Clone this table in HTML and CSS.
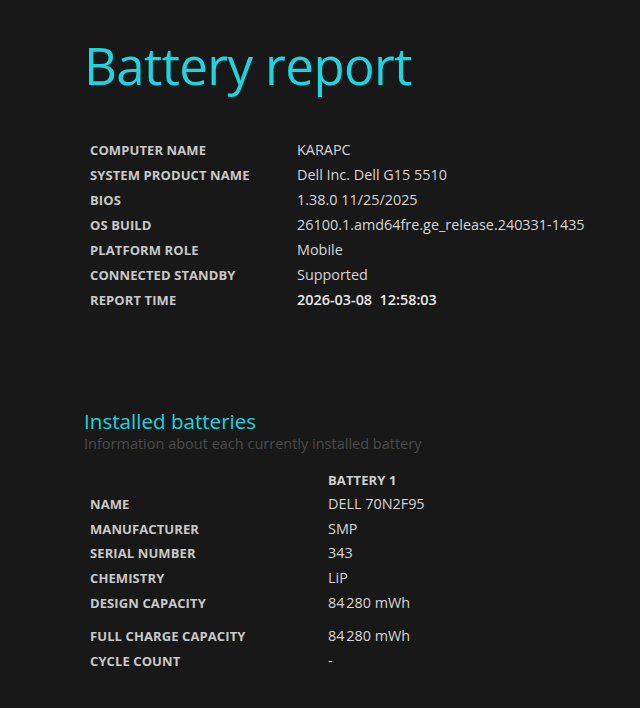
FILE: index.html
```html
<!DOCTYPE html>
<html>
<head>
<meta charset="utf-8">
<link rel="stylesheet" href="styles.css">
</head>
<body>
<main class="page">
  <h1 class="title">Battery report</h1>
  <div class="info">
    <div class="label">COMPUTER NAME</div><div class="value">KARAPC</div>
    <div class="label">SYSTEM PRODUCT NAME</div><div class="value">Dell Inc. Dell G15 5510</div>
    <div class="label">BIOS</div><div class="value">1.38.0 11/25/2025</div>
    <div class="label">OS BUILD</div><div class="value">26100.1.amd64fre.ge_release.240331-1435</div>
    <div class="label">PLATFORM ROLE</div><div class="value">Mobile</div>
    <div class="label">CONNECTED STANDBY</div><div class="value">Supported</div>
    <div class="label">REPORT TIME</div><div class="value strong">2026-03-08&nbsp;&nbsp;12:58:03</div>
  </div>

  <section class="batteries">
    <h2 class="section-title">Installed batteries</h2>
    <p class="section-sub">Information about each currently installed battery</p>
    <div class="bat">
      <div class="label"></div><div class="label head">BATTERY 1</div>
      <div class="label">NAME</div><div class="value">DELL 70N2F95</div>
      <div class="label">MANUFACTURER</div><div class="value">SMP</div>
      <div class="label">SERIAL NUMBER</div><div class="value">343</div>
      <div class="label">CHEMISTRY</div><div class="value">LiP</div>
      <div class="label">DESIGN CAPACITY</div><div class="value">84&#8239;280 mWh</div>
      <div class="label gap">FULL CHARGE CAPACITY</div><div class="value gap">84&#8239;280 mWh</div>
      <div class="label">CYCLE COUNT</div><div class="value">-</div>
    </div>
  </section>
</main>
</body>
</html>
```

FILE: styles.css
```css
html, body {
  margin: 0;
  padding: 0;
  background: #181818;
}
body {
  font-family: "Open Sans", "Noto Sans", sans-serif;
  color: #d8d8d8;
}
.page {
  padding: 30px 0 0 84px;
}
.title {
  margin: 0;
  font-weight: 400;
  font-size: 51px;
  line-height: 70px;
  color: #1fd3df;
  letter-spacing: -0.6px;
}
.info {
  display: grid;
  grid-template-columns: 207px auto;
  grid-auto-rows: 25px;
  margin: 37px 0 0 6px;
  align-items: center;
}
.label {
  font-size: 13px;
  font-weight: 700;
  color: #c9c9c9;
  letter-spacing: 0.1px;
}
.value {
  font-size: 14.4px;
  color: #d6d6d6;
}
.value.strong {
  font-weight: 600;
  color: #e8e8e8;
}
.batteries {
  margin-top: 96px;
}
.section-title {
  margin: 0;
  font-size: 20.6px;
  font-weight: 400;
  line-height: 26px;
  color: #1fd3df;
}
.section-sub {
  margin: 0;
  font-size: 14.5px;
  line-height: 20px;
  color: #4a4a4a;
}
.bat {
  display: grid;
  grid-template-columns: 238px auto;
  grid-template-rows: 24px 24px 25px 24px 25px 25px 33px 25px;
  margin: 14px 0 0 6px;
  align-items: end;
}
.bat > div {
  line-height: 24px;
}
.label.head {
  color: #d0d0d0;
}
```
